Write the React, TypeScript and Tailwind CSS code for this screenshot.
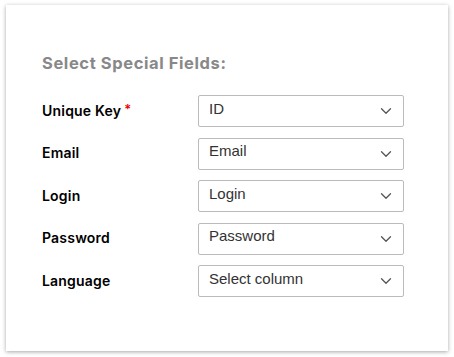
import { ChevronDown } from "lucide-react";

const fields = [
  { label: "Unique Key", value: "ID", required: true },
  { label: "Email", value: "Email" },
  { label: "Login", value: "Login" },
  { label: "Password", value: "Password" },
  { label: "Language", value: "Select column" },
];

export default function App() {
  return (
    <div className="w-[454px] h-[357px] bg-white pt-[5px] pl-[6px]">
      <div className="w-[442px] h-[346px] bg-white shadow-[0_1px_4px_rgba(0,0,0,0.35)] pl-9 pt-[48px]">
        <div className="text-[16.5px] font-bold text-[#888] font-['Inter',sans-serif] leading-[20px] tracking-[0.6px]">
          Select Special Fields:
        </div>
        <div className="flex flex-col gap-[10.5px] mt-[22px]">
          {fields.map((f) => (
            <div key={f.label} className="flex items-center h-[32px]">
              <div className="w-[156px] text-[14px] font-semibold text-black font-['Inter',sans-serif] -mt-[2px] tracking-[0.2px]">
                {f.label}
                {f.required && <span className="text-[#e00] ml-[3px] text-[13px] align-[2px]">*</span>}
              </div>
              <div className="w-[206px] h-[32px] border border-[#bbb] rounded-[2px] flex items-center justify-between pl-[10px] pr-[8px]">
                <span className="text-[15px] text-[#333] font-['Liberation_Sans',Arial,sans-serif] -mt-[4px]">
                  {f.value}
                </span>
                <ChevronDown size={18} strokeWidth={1.7} className="text-[#555]" />
              </div>
            </div>
          ))}
        </div>
      </div>
    </div>
  );
}
